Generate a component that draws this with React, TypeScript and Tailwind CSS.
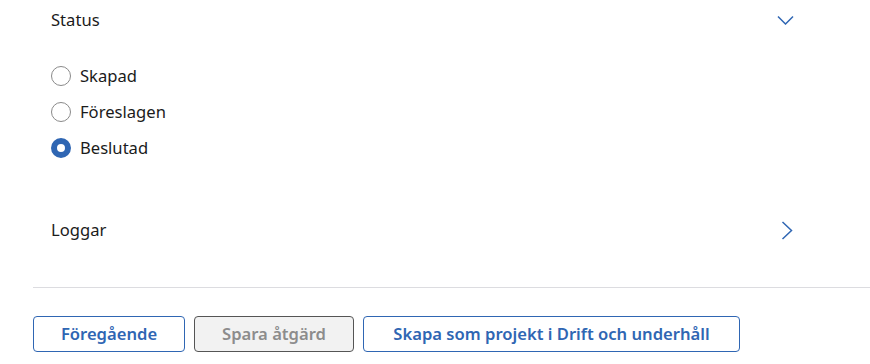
import { useState } from "react";

const options = ["Skapad", "Föreslagen", "Beslutad"];

function ChevronDown() {
  return (
    <svg width="17" height="10" viewBox="0 0 17 10" fill="none">
      <path d="M1 1.5 L8.5 9 L16 1.5" stroke="#2f66b3" strokeWidth="1.5" />
    </svg>
  );
}

function ChevronRight() {
  return (
    <svg width="12" height="19" viewBox="0 0 12 19" fill="none">
      <path d="M1.5 1 L10.5 9.5 L1.5 18" stroke="#2f66b3" strokeWidth="1.5" />
    </svg>
  );
}

export default function App() {
  const [status, setStatus] = useState("Beslutad");

  return (
    <div
      className="w-[870px] h-[364px] bg-white text-[#1b1b1b] pl-[33px]"
      style={{ fontFamily: '"Segoe UI", "Noto Sans", sans-serif' }}
    >
      <div className="flex items-center justify-between h-[40px] pl-[18px] pr-[76px] text-[16.6px]">
        <span>Status</span>
        <ChevronDown />
      </div>

      <div className="mt-[18px] pl-[18px] flex flex-col">
        {options.map((o) => (
          <label key={o} className="flex items-center h-[36px] gap-[9px] text-[16.6px] cursor-pointer">
            <span
              onClick={() => setStatus(o)}
              className={
                o === status
                  ? "w-[20px] h-[20px] rounded-full border-[6px] border-[#2f66b3] bg-white"
                  : "w-[20px] h-[20px] rounded-full border border-[#8a8a8a] bg-white"
              }
            />
            <span>{o}</span>
          </label>
        ))}
      </div>

      <div className="mt-[44px] flex items-center justify-between h-[40px] pl-[18px] pr-[77px] text-[16.6px]">
        <span>Loggar</span>
        <ChevronRight />
      </div>

      <div className="mt-[37px] border-t border-[#dcdce0]" />

      <div className="mt-[28px] flex gap-[9px] text-[16.6px] font-semibold">
        <button className="w-[152px] h-[36px] rounded-[4px] border border-[#2f66b3] text-[#2f66b3] bg-white">
          Föregående
        </button>
        <button
          disabled
          className="w-[160px] h-[36px] rounded-[4px] border border-[#555] text-[#8c8c8c] bg-[#f2f2f2]"
        >
          Spara åtgärd
        </button>
        <button className="w-[377px] h-[36px] rounded-[4px] border border-[#2f66b3] text-[#2f66b3] bg-white">
          Skapa som projekt i Drift och underhåll
        </button>
      </div>
    </div>
  );
}
